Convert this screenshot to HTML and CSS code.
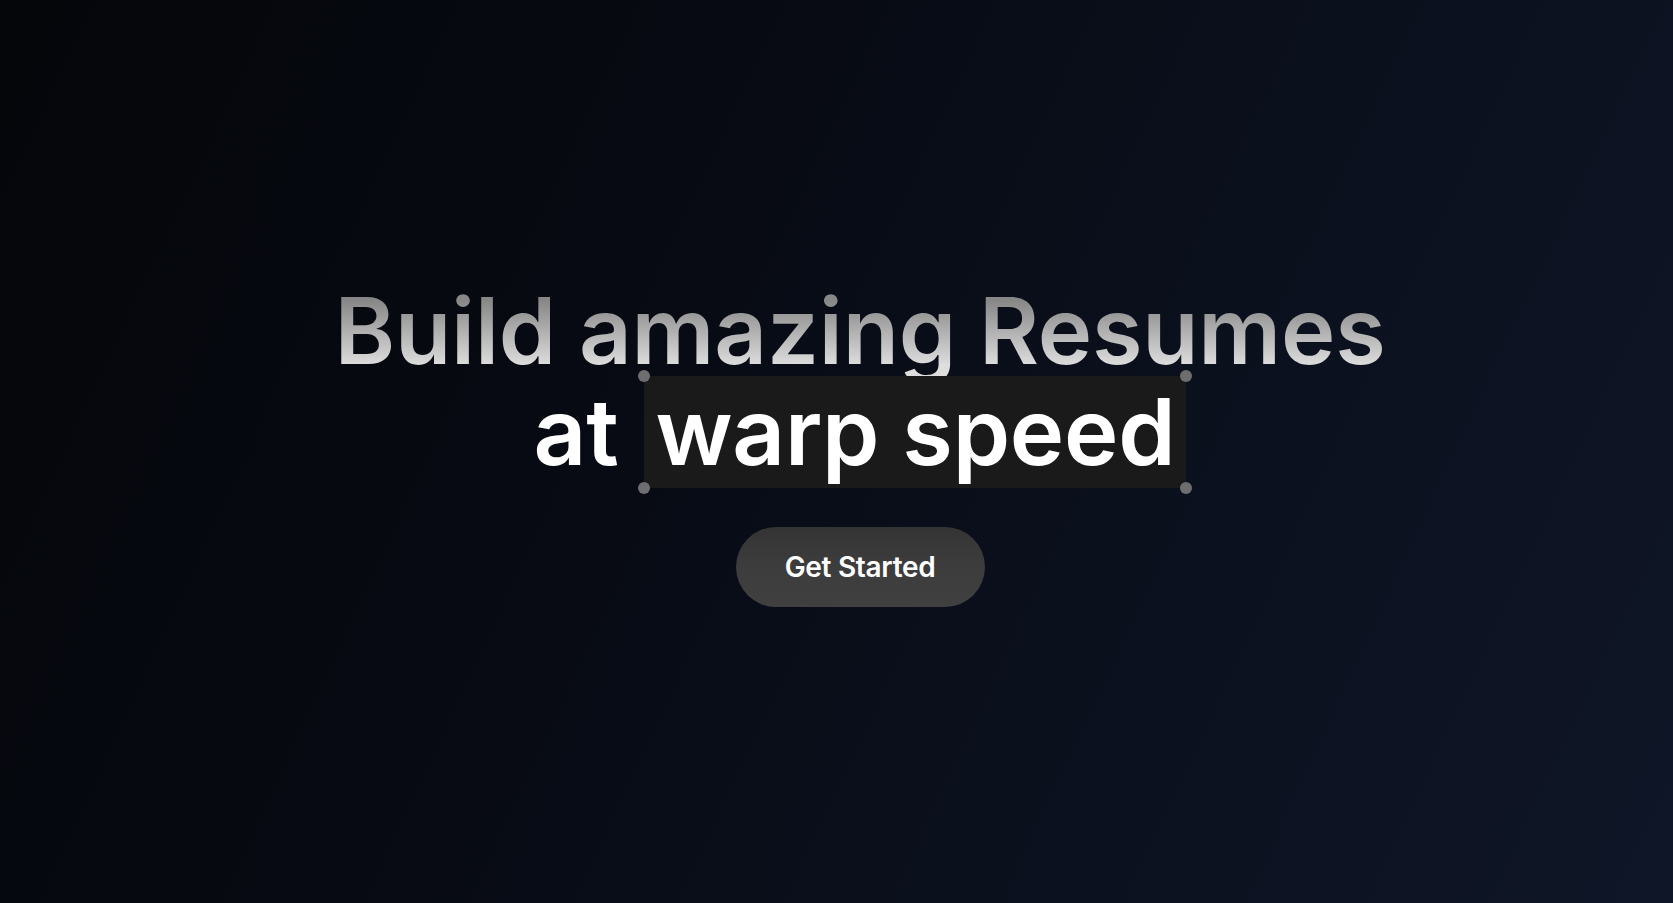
FILE: index.html
```html
<!DOCTYPE html>
<html lang="en">
<head>
<meta charset="utf-8">
<title>Build amazing Resumes at warp speed</title>
<link rel="stylesheet" href="styles.css">
</head>
<body>
<main class="hero">
  <h1 class="title">
    <span class="line line-top">Build amazing Resumes</span>
    <span class="line line-bottom">at <span class="highlight">warp speed<span class="dot dot-tl"></span><span class="dot dot-tr"></span><span class="dot dot-bl"></span><span class="dot dot-br"></span></span></span>
  </h1>
  <button class="cta" type="button">Get Started</button>
</main>
</body>
</html>
```

FILE: styles.css
```css
* { box-sizing: border-box; }
html, body { margin: 0; padding: 0; height: 100%; }
body {
  font-family: Inter, "Noto Sans", sans-serif;
  background: linear-gradient(115deg, #04060a 0%, #070a12 35%, #0b101d 65%, #0f1627 100%);
  color: #fff;
  overflow: hidden;
}
.hero {
  min-height: 100vh;
  display: flex;
  flex-direction: column;
  align-items: center;
  justify-content: center;
  padding-left: 47px;
  padding-bottom: 17px;
}
.title {
  margin: 0;
  text-align: center;
  font-size: 92px;
  font-weight: 600;
  line-height: 101px;
  letter-spacing: -0.2px;
}
.line { display: block; }
.line-top {
  background: linear-gradient(180deg, #878787 20%, #dedede 85%);
  -webkit-background-clip: text;
  background-clip: text;
  color: transparent;
}
.line-bottom { color: #fff; margin-top: -5px; word-spacing: 3px; }
.highlight {
  position: relative;
  display: inline-block;
  background: #1a1a1a;
  padding: 5px 11px 6px 11px;
  line-height: 101px;
  word-spacing: 0;
}
.dot {
  position: absolute;
  width: 12px;
  height: 12px;
  border-radius: 50%;
  background: #6e6e70;
}
.dot-tl { left: -6px; top: -6px; }
.dot-tr { right: -6px; top: -6px; }
.dot-bl { left: -6px; bottom: -6px; }
.dot-br { right: -6px; bottom: -6px; }
.cta {
  margin-top: 39px;
  width: 249px;
  height: 80px;
  border: none;
  border-radius: 40px;
  background: linear-gradient(180deg, #343434 0%, #3c3c3c 45%, #404040 100%);
  color: #fff;
  font-family: Inter, "Noto Sans", sans-serif;
  font-size: 28px;
  font-weight: 600;
  letter-spacing: -0.3px;
  cursor: pointer;
}
```
